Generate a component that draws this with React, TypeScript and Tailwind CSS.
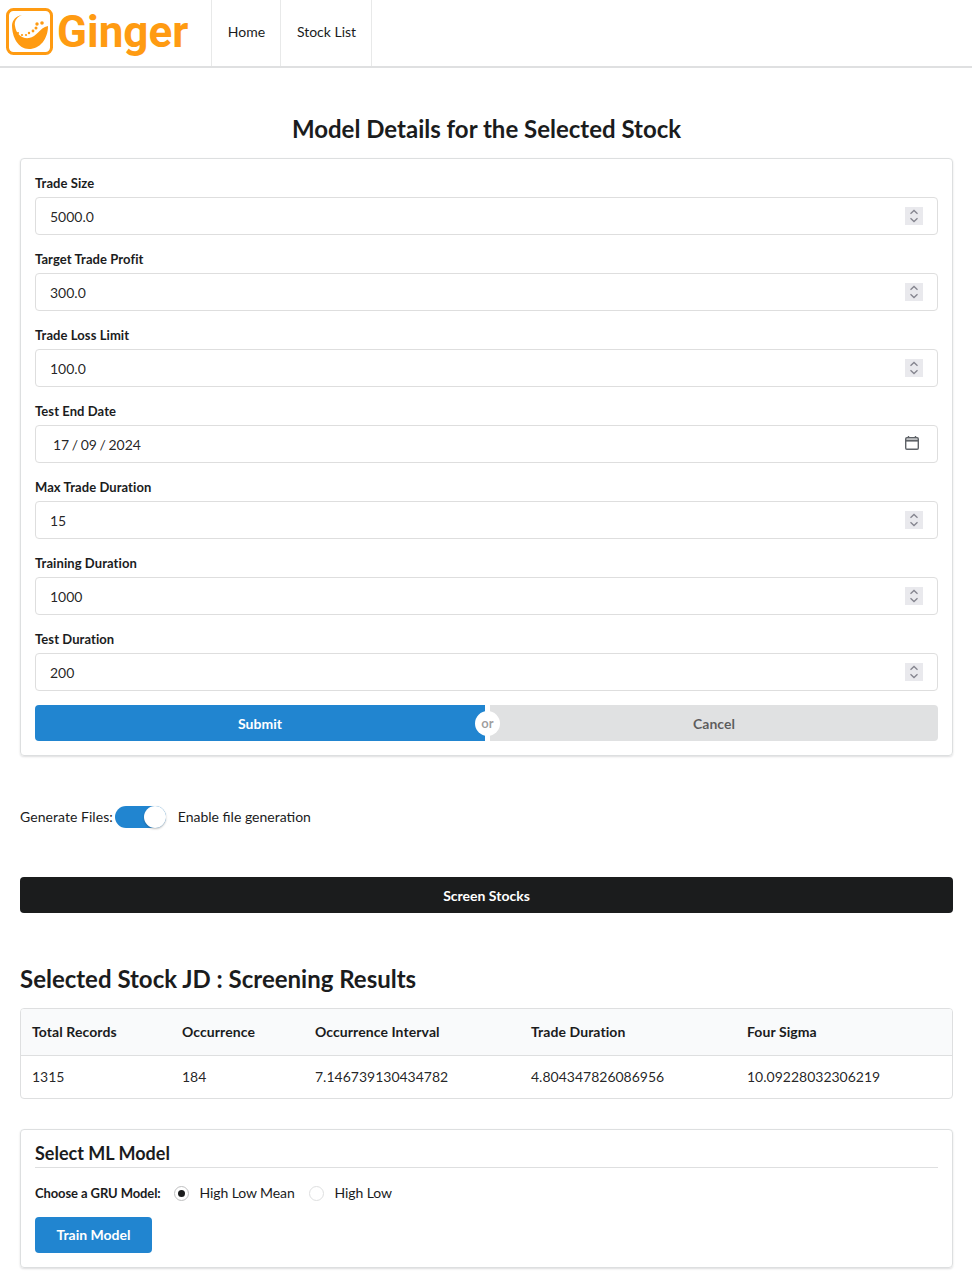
const fields = [
  { label: 'Trade Size', value: '5000.0' },
  { label: 'Target Trade Profit', value: '300.0' },
  { label: 'Trade Loss Limit', value: '100.0' },
  { label: 'Test End Date', value: '17 / 09 / 2024', date: true },
  { label: 'Max Trade Duration', value: '15' },
  { label: 'Training Duration', value: '1000' },
  { label: 'Test Duration', value: '200' },
];

const columns = [
  { title: 'Total Records', value: '1315', width: 'w-[150px]' },
  { title: 'Occurrence', value: '184', width: 'w-[133px]' },
  { title: 'Occurrence Interval', value: '7.146739130434782', width: 'w-[216px]' },
  { title: 'Trade Duration', value: '4.804347826086956', width: 'w-[216px]' },
  { title: 'Four Sigma', value: '10.09228032306219', width: 'w-[216px]' },
];

function Logo() {
  return (
    <svg width="47" height="47" viewBox="0 0 47 47" className="-mt-[3px] shrink-0">
      <rect x="1.5" y="1.5" width="44" height="44" rx="6" fill="#fff" stroke="#ff9b12" strokeWidth="3" />
      <path d="M6 17 C6.5 12 10 8 16 7 C11 9 8 13 9 18 C10 26 16 31 23 30 C31 29 33 20 42 18 C42 31 34 41 23 41 C12 41 6 29 6 17 Z" fill="#ff9b12" />
      {[[36, 15, 1.8], [31, 16, 1.7], [30, 20, 1.5], [27, 23, 1.4], [23, 25, 1.2], [20, 27, 1.1], [16, 27, 1.1], [12, 25, 1.1]].map(([cx, cy, r]) => (
        <circle key={cx} cx={cx} cy={cy} r={r} fill="#ff9b12" />
      ))}
    </svg>
  );
}

function Spinner() {
  return (
    <span className="absolute top-[10px] right-[15px] flex h-[18px] w-[18px] items-center justify-center bg-[#e9e9ed]">
      <svg width="10" height="14" viewBox="0 0 10 14" fill="none" stroke="#85858f" strokeWidth="1.3">
        <path d="M1.5 4.8L5 1.5L8.5 4.8" />
        <path d="M1.5 9.2L5 12.5L8.5 9.2" />
      </svg>
    </span>
  );
}

function Field({ label, value, date }: { label: string; value: string; date?: boolean }) {
  return (
    <div className="mb-[14px]">
      <label className="mb-1 block text-[13px] leading-[20px] font-bold tracking-[0.08px] text-[#1b1c1d]">{label}</label>
      <div className="relative">
        <input
          type="text"
          readOnly
          defaultValue={value}
          className={`h-[38px] w-full rounded border border-[#dedede] bg-white pr-[14px] text-sm text-[rgba(0,0,0,0.87)] outline-none ${date ? 'pl-[17px] [word-spacing:-1px]' : 'pl-[14px]'}`}
        />
        {date ? (
          <svg width="16" height="16" viewBox="0 0 16 16" className="absolute top-[10px] right-[18px]" fill="none" stroke="#5f6368" strokeWidth="1.4">
            <rect x="1.7" y="2.7" width="12.6" height="11.6" rx="1.2" />
            <path d="M1.7 5.6H14.3" strokeWidth="2" />
            <path d="M4.5 1V3M11.5 1V3" />
          </svg>
        ) : (
          <Spinner />
        )}
      </div>
    </div>
  );
}

export default function App() {
  return (
    <div className="min-h-screen bg-white font-['Lato','Liberation_Sans',sans-serif] text-sm text-[rgba(0,0,0,0.87)]">
      <nav className="flex h-[68px] items-stretch border-b-2 border-[#dfe0e1] bg-white">
        <div className="flex w-[212px] items-center gap-[4px] border-r border-[#e8e9e9] pl-[6px]">
          <Logo />
          <span className="-mt-[2px] font-['Roboto',sans-serif] text-[44px] leading-none font-bold text-[#ff9b12]">Ginger</span>
        </div>
        <a className="flex w-[69px] items-center justify-center border-r border-[#e8e9e9] pb-[2px] pl-[1px] text-[#1b1c1d]">Home</a>
        <a className="flex w-[91px] items-center justify-center border-r border-[#e8e9e9] pb-[2px] pl-[1px] text-[#1b1c1d]">Stock List</a>
      </nav>

      <main className="pt-[46px] pr-[19px] pb-[11px] pl-[20px]">
        <h2 className="mb-[14px] text-center text-2xl leading-[30px] font-bold text-[#1b1c1d]">
          Model Details for the Selected Stock
        </h2>

        <form className="rounded border border-[#dddfe0] p-[14px] shadow-[0_1px_2px_rgba(34,36,38,0.15)]">
          {fields.map((f) => (
            <Field key={f.label} label={f.label} value={f.value} date={f.date} />
          ))}
          <div className="relative flex h-9 font-bold">
            <button type="button" className="w-[450px] rounded-l bg-[#2185d0] pt-[1px] text-white">Submit</button>
            <div className="w-[5px]" />
            <button type="button" className="flex-1 rounded-r bg-[#e0e1e2] pt-[1px] text-[rgba(0,0,0,0.6)]">Cancel</button>
            <span className="absolute top-[6px] left-[440px] flex h-[25px] w-[25px] items-center justify-center rounded-full bg-white text-[13px] text-[rgba(0,0,0,0.4)]">or</span>
          </div>
        </form>

        <div className="mt-[50px] flex h-[22px] items-center">
          <span className="mr-[2px] tracking-[0.05px] text-[#1b1c1d]">Generate Files:</span>
          <span className="relative block h-[22px] w-[51px] rounded-full bg-[#2185d0]">
            <span className="absolute top-0 right-0 h-[22px] w-[22px] rounded-full bg-white shadow-[0_1px_2px_rgba(34,36,38,0.3)]" />
          </span>
          <span className="ml-[12px] text-[#1b1c1d]">Enable file generation</span>
        </div>

        <button type="button" className="mt-[49px] block h-9 w-full rounded bg-[#1b1c1d] pt-[1px] font-bold text-white">
          Screen Stocks
        </button>

        <h2 className="mt-[51px] text-2xl leading-[30px] font-bold text-[#1b1c1d]">Selected Stock JD : Screening Results</h2>

        <div className="mt-[14px] overflow-hidden rounded border border-[#dedfe0]">
          <table className="w-full table-fixed border-collapse">
            <thead>
              <tr className="h-[46px] border-b border-[#dedfe0] bg-[#f9fafb]">
                {columns.map((c) => (
                  <th key={c.title} className={`${c.width} px-[11px] text-left font-bold tracking-[0.08px] text-[#1b1c1d]`}>{c.title}</th>
                ))}
              </tr>
            </thead>
            <tbody>
              <tr className="h-[43px]">
                {columns.map((c) => (
                  <td key={c.title} className="px-[11px] text-[rgba(0,0,0,0.87)]">{c.value}</td>
                ))}
              </tr>
            </tbody>
          </table>
        </div>

        <section className="mt-[30px] rounded border border-[#dddfe0] p-[14px] pt-[13px] shadow-[0_1px_2px_rgba(34,36,38,0.15)]">
          <h4 className="border-b border-[#dedfe0] pb-[4px] text-lg leading-[20px] font-bold text-[#1b1c1d]">Select ML Model</h4>
          <div className="mt-[14px] flex h-[22px] items-center">
            <span className="mr-[13px] text-[13px] font-bold tracking-[-0.1px] text-[#1b1c1d]">Choose a GRU Model:</span>
            <span className="flex h-[15px] w-[15px] items-center justify-center rounded-full border border-[#bfc0c1]">
              <span className="h-[7px] w-[7px] rounded-full bg-[#1b1c1d]" />
            </span>
            <span className="ml-[11px] tracking-[-0.1px] text-[#1b1c1d]">High Low Mean</span>
            <span className="ml-[14px] h-[15px] w-[15px] rounded-full border border-[#dedfe0]" />
            <span className="ml-[11px] tracking-[-0.1px] text-[#1b1c1d]">High Low</span>
          </div>
          <button type="button" className="mt-[13px] block h-9 w-[117px] rounded bg-[#2185d0] font-bold text-white">Train Model</button>
        </section>
      </main>
    </div>
  );
}
